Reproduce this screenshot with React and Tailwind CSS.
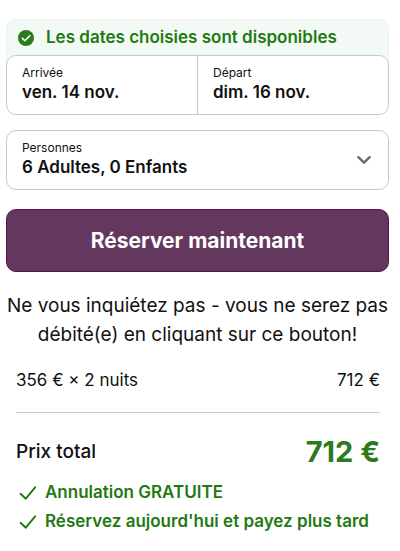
import React, { useState } from 'react'

const perks = ['Annulation GRATUITE', "Réservez aujourd'hui et payez plus tard"]

const CheckCircle = () => (
  <svg viewBox="0 0 16 16" className="w-4 h-4 shrink-0" aria-hidden="true">
    <circle cx="8" cy="8" r="8" fill="#2b7a1c" />
    <path
      d="M4.3 8.2l2.5 2.5 5-5"
      fill="none"
      stroke="#fff"
      strokeWidth="1.6"
      strokeLinecap="round"
      strokeLinejoin="round"
    />
  </svg>
)

const Check = () => (
  <svg viewBox="0 0 18 14" className="w-[18px] h-[14px] shrink-0" aria-hidden="true">
    <path
      d="M1.6 7.8l5.2 4.9L16.1 1.3"
      fill="none"
      stroke="#1f7a12"
      strokeWidth="1.9"
      strokeLinecap="round"
      strokeLinejoin="round"
    />
  </svg>
)

const Chevron = () => (
  <svg
    viewBox="0 0 14 8"
    className="absolute right-[17px] top-1/2 -translate-y-1/2 w-[14px] h-2 pointer-events-none"
    aria-hidden="true"
  >
    <path
      d="M1.4 1.2L7 6.6l5.6-5.4"
      fill="none"
      stroke="#6b6b6b"
      strokeWidth="2.4"
      strokeLinecap="round"
      strokeLinejoin="round"
    />
  </svg>
)

const DateField = ({ label, value }) => (
  <button type="button" className="flex-1 flex flex-col items-start pl-[15px] pt-2 pb-2 text-left">
    <span className="text-xs leading-[18px]">{label}</span>
    <span className="text-[17px] leading-5 font-semibold">{value}</span>
  </button>
)

const App = () => {
  const [guests, setGuests] = useState('6-0')

  return (
    <main className="bg-white text-[#111] font-['Inter',sans-serif] pl-[6px] pr-[11px] pt-[19px] pb-4">
      <section>
        <div className="rounded-t-[10px] bg-[#f3f9f4] border border-b-0 border-[#e9f4ea] -mb-[10px] pb-[10px]">
          <p className="flex items-center gap-3 h-[35px] px-[11px] text-[17px] font-semibold text-[#1f7a12]">
            <CheckCircle />
            Les dates choisies sont disponibles
          </p>
        </div>
        <div className="relative flex h-[60px] bg-white border border-[#c8c8c8] rounded-[10px] divide-x divide-[#c8c8c8]">
          <DateField label="Arrivée" value="ven. 14 nov." />
          <DateField label="Départ" value="dim. 16 nov." />
        </div>
      </section>

      <div className="relative mt-[15px] h-[60px] pt-2 border border-[#c8c8c8] rounded-[10px]">
        <label htmlFor="guests" className="block pl-[15px] text-xs leading-[18px]">
          Personnes
        </label>
        <select
          id="guests"
          value={guests}
          onChange={(e) => setGuests(e.target.value)}
          className="block w-full pl-[15px] pr-10 appearance-none bg-transparent text-[17px] leading-5 font-semibold"
        >
          <option value="6-0">6 Adultes, 0 Enfants</option>
          <option value="4-2">4 Adultes, 2 Enfants</option>
        </select>
        <Chevron />
      </div>

      <button
        type="button"
        className="mt-[19px] w-full h-[63px] rounded-[10px] border border-[#581450] bg-[#64375e] text-white text-[21px] font-bold"
      >
        Réserver maintenant
      </button>

      <p className="mt-[19px] text-center text-[19px] leading-[29px]">
        Ne vous inquiétez pas - vous ne serez pas débité(e) en cliquant sur ce bouton!
      </p>

      <section className="pl-[10px] pr-[9px]">
        <div className="flex justify-between mt-[19px] pb-5 border-b border-[#c8c8c8] text-[17px] leading-6">
          <span>356 € × 2 nuits</span>
          <span>712 €</span>
        </div>
        <div className="flex items-center justify-between mt-[19px] h-10">
          <span className="text-[19px] font-medium">Prix total</span>
          <span className="text-[29px] font-bold text-[#2b7a1c]">712 €</span>
        </div>
        <ul className="mt-[6px] pl-[3px] text-[17px] leading-[29px] font-semibold text-[#1f7a12]">
          {perks.map((perk) => (
            <li key={perk} className="flex items-center gap-2">
              <Check />
              {perk}
            </li>
          ))}
        </ul>
      </section>
    </main>
  )
}

export default App
